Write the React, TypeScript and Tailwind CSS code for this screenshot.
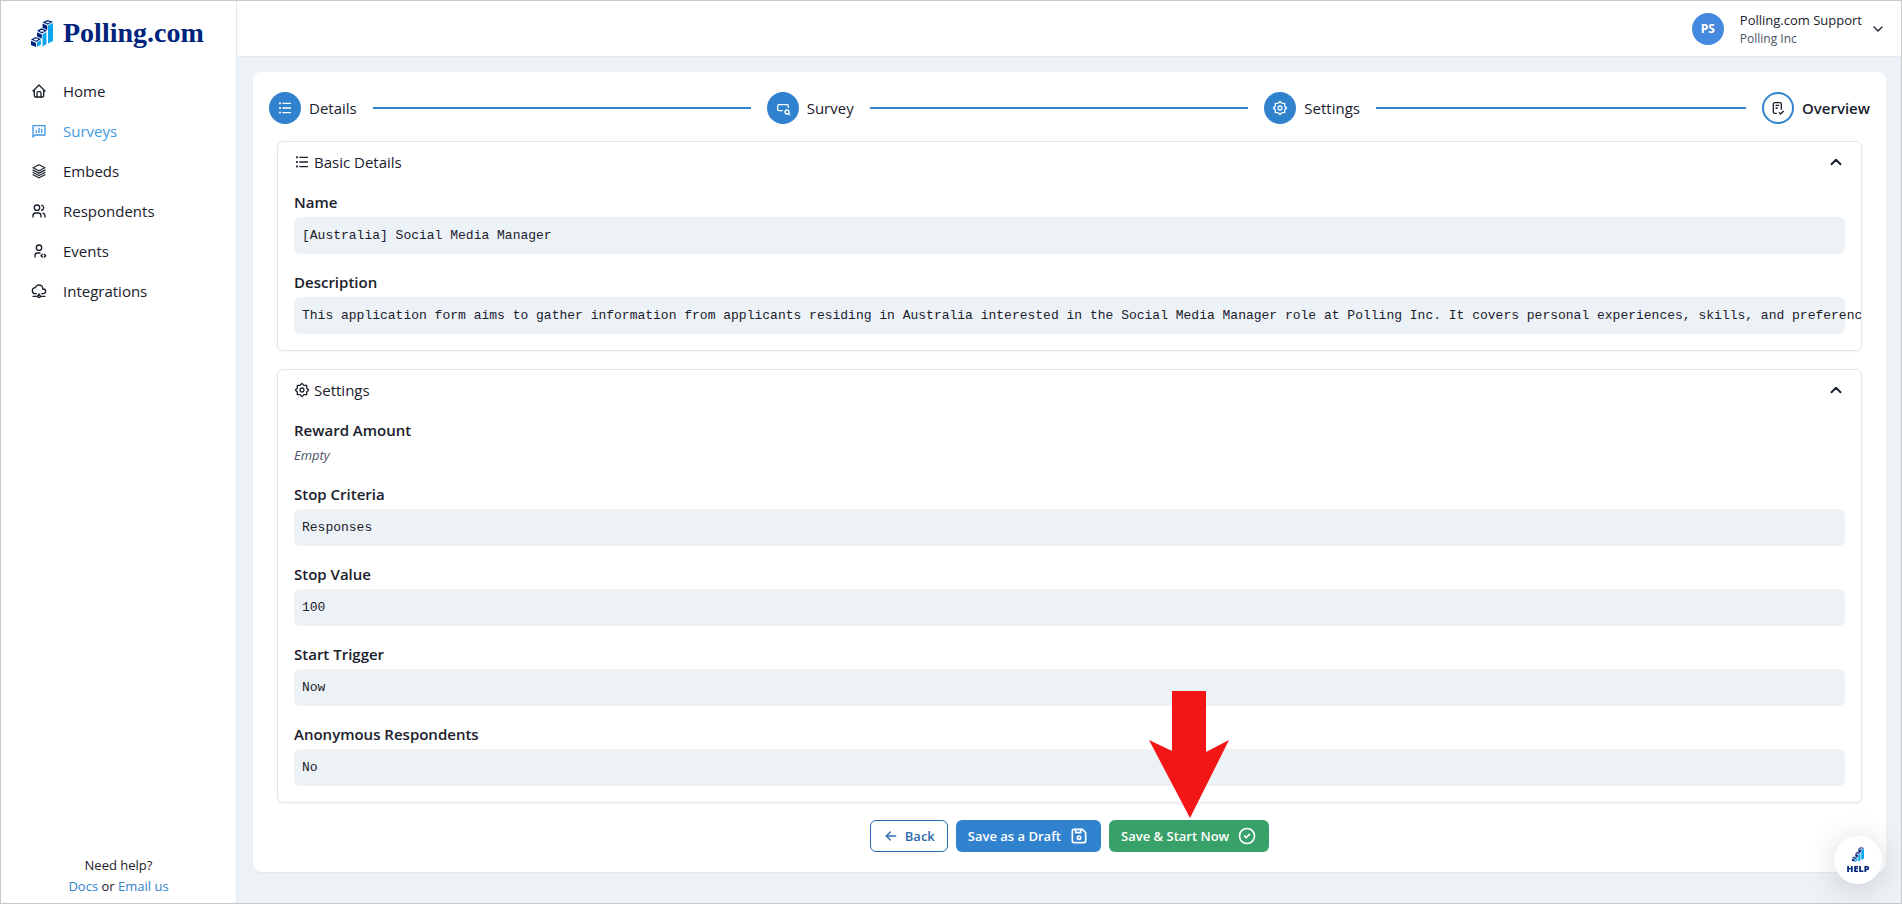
import { useState, type ReactNode } from "react"
import type { IconType } from "react-icons"
import { RiChatPollLine, RiListUnordered, RiSettings2Line } from "react-icons/ri"
import {
  TbArrowLeft,
  TbChecklist,
  TbCircleCheck,
  TbCloudNetwork,
  TbDeviceFloppy,
  TbHome,
  TbInputSearch,
  TbUserCode,
  TbUsers,
} from "react-icons/tb"
import { ChevronDown, ChevronUp } from "lucide-react"

function LayersIcon({ className }: { className?: string }) {
  return (
    <svg viewBox="0 0 24 24" fill="none" stroke="currentColor" strokeWidth="1.8" strokeLinejoin="round" strokeLinecap="round" className={className}>
      <path d="M12 2.500 3 7l9 4.500L21 7z" />
      <path d="m3 10.700 9 4.500 9-4.500" />
      <path d="m3 14.200 9 4.500 9-4.500" />
      <path d="m3 17.700 9 4.500 9-4.500" />
    </svg>
  )
}

const navItems = [
  { label: "Home", icon: TbHome },
  { label: "Surveys", icon: RiChatPollLine, active: true },
  { label: "Embeds", icon: LayersIcon },
  { label: "Respondents", icon: TbUsers },
  { label: "Events", icon: TbUserCode },
  { label: "Integrations", icon: TbCloudNetwork },
]

const steps = [
  { label: "Details", icon: RiListUnordered },
  { label: "Survey", icon: TbInputSearch },
  { label: "Settings", icon: RiSettings2Line },
  { label: "Overview", icon: TbChecklist, current: true },
]

const basicDetails = [
  { label: "Name", value: "[Australia] Social Media Manager" },
  {
    label: "Description",
    value:
      "This application form aims to gather information from applicants residing in Australia interested in the Social Media Manager role at Polling Inc. It covers personal experiences, skills, and preferences to",
  },
]

const settings = [
  { label: "Reward Amount", value: "" },
  { label: "Stop Criteria", value: "Responses" },
  { label: "Stop Value", value: "100" },
  { label: "Start Trigger", value: "Now" },
  { label: "Anonymous Respondents", value: "No" },
]

function LogoMark({ className }: { className?: string }) {
  return (
    <svg viewBox="0 0 22 27" className={className} aria-hidden="true">
      {/* bars */}
      <path d="M6 22.500 10 20v4.500L6 27z" fill="#0aa5ee" />
      <path d="M11.500 14.500 15.500 12v12l-4 2.500z" fill="#0aa5ee" />
      <path d="M17 5.500 22 3v18L17 23.500z" fill="#0aa5ee" />
      {/* cubes */}
      <g fill="#00237d">
        <path d="m0 19.500 4.500-2.500L10 19l-4.500 3z" />
        <path d="M0 20.800 5 23v4l-5-2z" />
        <path d="m6 10.800 4.500-2.500L16 10.500l-5 3z" />
        <path d="m6 12.200 4.800 2.200v4.200L6 16.500z" />
        <path d="m11.500 2.200 5-2.200L22 1.800l-5.200 2.900z" />
        <path d="m11.500 3.500 4.800 2.200V10l-4.800-2.200z" />
      </g>
      <g fill="#ffffff">
        <ellipse cx="5" cy="19.500" rx="2" ry="0.900" />
        <ellipse cx="11" cy="10.900" rx="2" ry="0.900" />
        <ellipse cx="16.800" cy="2.300" rx="2" ry="0.900" />
      </g>
    </svg>
  )
}

function Field({ label, value }: { label: string; value: string }) {
  return (
    <div className="flex flex-col gap-[3px]">
      <dt className="text-[15px] leading-6 font-semibold">{label}</dt>
      {value ? (
        <dd className="rounded-md bg-[#edf2f7] px-2 py-2 font-['Liberation_Mono',monospace] text-[13px] leading-[21px] whitespace-pre">
          {value}
        </dd>
      ) : (
        <dd className="text-[13px] leading-[21px] text-[#4a5568] italic">Empty</dd>
      )}
    </div>
  )
}

function Panel({ title, icon: Icon, children }: { title: string; icon: IconType; children: ReactNode }) {
  const [open, setOpen] = useState(true)
  const Chevron = open ? ChevronUp : ChevronDown

  return (
    <section className="overflow-hidden rounded-md border border-[#dfe6ef] shadow-xs">
      <button
        type="button"
        aria-expanded={open}
        onClick={() => setOpen(!open)}
        className="flex h-10 w-full items-center gap-1 px-4"
      >
        <Icon className="size-4" />
        <span className="flex-1 text-left">{title}</span>
        <Chevron strokeWidth={2.5} className="size-[18px]" />
      </button>
      {open && <dl className="flex flex-col gap-4 px-4 pt-2 pb-4">{children}</dl>}
    </section>
  )
}

function Sidebar() {
  return (
    <aside className="flex w-[236px] shrink-0 flex-col border-r border-[#e2e8f0] bg-white">
      <a href="#" className="flex items-center gap-2.5 px-[30px] pt-4">
        <LogoMark className="h-[27px] w-[22px]" />
        <span className="font-['Liberation_Serif',serif] text-[28px] leading-8 font-bold text-[#00237d]">Polling.com</span>
      </a>
      <nav className="mt-[22px] flex flex-col">
        {navItems.map(({ label, icon: Icon, active }) => (
          <a
            key={label}
            href="#"
            className={`flex h-10 items-center gap-4 px-[30px] ${active ? "font-medium text-[#4299e1]" : ""}`}
          >
            <Icon className="size-4" />
            {label}
          </a>
        ))}
      </nav>
      <div className="mt-auto pb-1.5 text-center text-[13px] leading-[21px]">
        <p>Need help?</p>
        <p>
          <a href="#" className="text-[#3182ce]">Docs</a> or <a href="#" className="text-[#3182ce]">Email us</a>
        </p>
      </div>
    </aside>
  )
}

function Header() {
  return (
    <header className="flex h-14 items-center justify-end border-b border-[#e2e8f0] bg-white pr-[15px]">
      <button type="button" className="flex items-center text-left">
        <span className="flex size-8 items-center justify-center rounded-full bg-[#4588e0] text-[12px] font-bold text-white">
          PS
        </span>
        <span className="ml-4 flex flex-col">
          <span className="text-[13px] leading-5">Polling.com Support</span>
          <span className="text-[12px] leading-[18px] text-[#4a5568]">Polling Inc</span>
        </span>
        <ChevronDown className="ml-2 size-4" />
      </button>
    </header>
  )
}

function Stepper() {
  return (
    <ol className="flex items-center">
      {steps.map(({ label, icon: Icon, current }) => (
        <li key={label} className={current ? "flex items-center" : "flex flex-1 items-center"}>
          <span
            className={`flex size-8 items-center justify-center rounded-full border-2 border-[#3182ce] ${
              current ? "" : "bg-[#3182ce] text-white"
            }`}
          >
            <Icon className="size-4" />
          </span>
          <span className={current ? "ml-2 font-semibold" : "ml-2"}>{label}</span>
          {!current && <span className="mx-4 h-0.5 flex-1 bg-[#3182ce]" />}
        </li>
      ))}
    </ol>
  )
}

export default function App() {
  return (
    <div className="flex min-h-screen border border-[#c8c8c8] bg-[#edf2f7] font-['Open_Sans',sans-serif] text-[15px] leading-6 text-[#1a202c]">
      <Sidebar />
      <div className="flex min-w-0 flex-1 flex-col">
        <Header />
        <main className="m-4 mr-[15px] mt-[15px] flex flex-col gap-[17px] rounded-lg bg-white px-4 py-5 shadow-xs">
          <Stepper />
          <div className="flex min-w-0 flex-col gap-[18px] px-2">
            <Panel title="Basic Details" icon={RiListUnordered}>
              {basicDetails.map((f) => (
                <Field key={f.label} {...f} />
              ))}
            </Panel>
            <Panel title="Settings" icon={RiSettings2Line}>
              {settings.map((f) => (
                <Field key={f.label} {...f} />
              ))}
            </Panel>
          </div>
          <div className="flex justify-center gap-2 text-[13px] font-semibold">
            <button type="button" className="flex h-8 items-center gap-1.5 rounded-md border border-[#2b6cb0] px-3 text-[#2b6cb0]">
              <TbArrowLeft className="size-4" />
              Back
            </button>
            <button type="button" className="flex h-8 items-center gap-2 rounded-md bg-[#3182ce] px-3 text-white">
              Save as a Draft
              <TbDeviceFloppy className="size-5" />
            </button>
            <div className="relative">
              <button type="button" className="flex h-8 items-center gap-2 rounded-md bg-[#38a169] px-3 text-white">
                Save &amp; Start Now
                <TbCircleCheck className="size-5" />
              </button>
              <svg
                viewBox="0 0 80 127"
                className="pointer-events-none absolute right-10 bottom-full mb-0.5 h-[127px] w-20"
                aria-hidden="true"
              >
                <path d="M23 0h34v61l23-12-39 78L0 49l23 11z" fill="#f21616" />
              </svg>
            </div>
          </div>
        </main>
      </div>
      <button
        type="button"
        className="fixed right-5 bottom-5 flex size-12 flex-col items-center justify-center rounded-full bg-white shadow-[0_4px_32px_rgba(0,0,0,0.16)]"
      >
        <LogoMark className="h-[15px] w-3" />
        <span className="mt-0.5 text-[9px] leading-[10px] font-extrabold text-[#00237d]">HELP</span>
      </button>
    </div>
  )
}
